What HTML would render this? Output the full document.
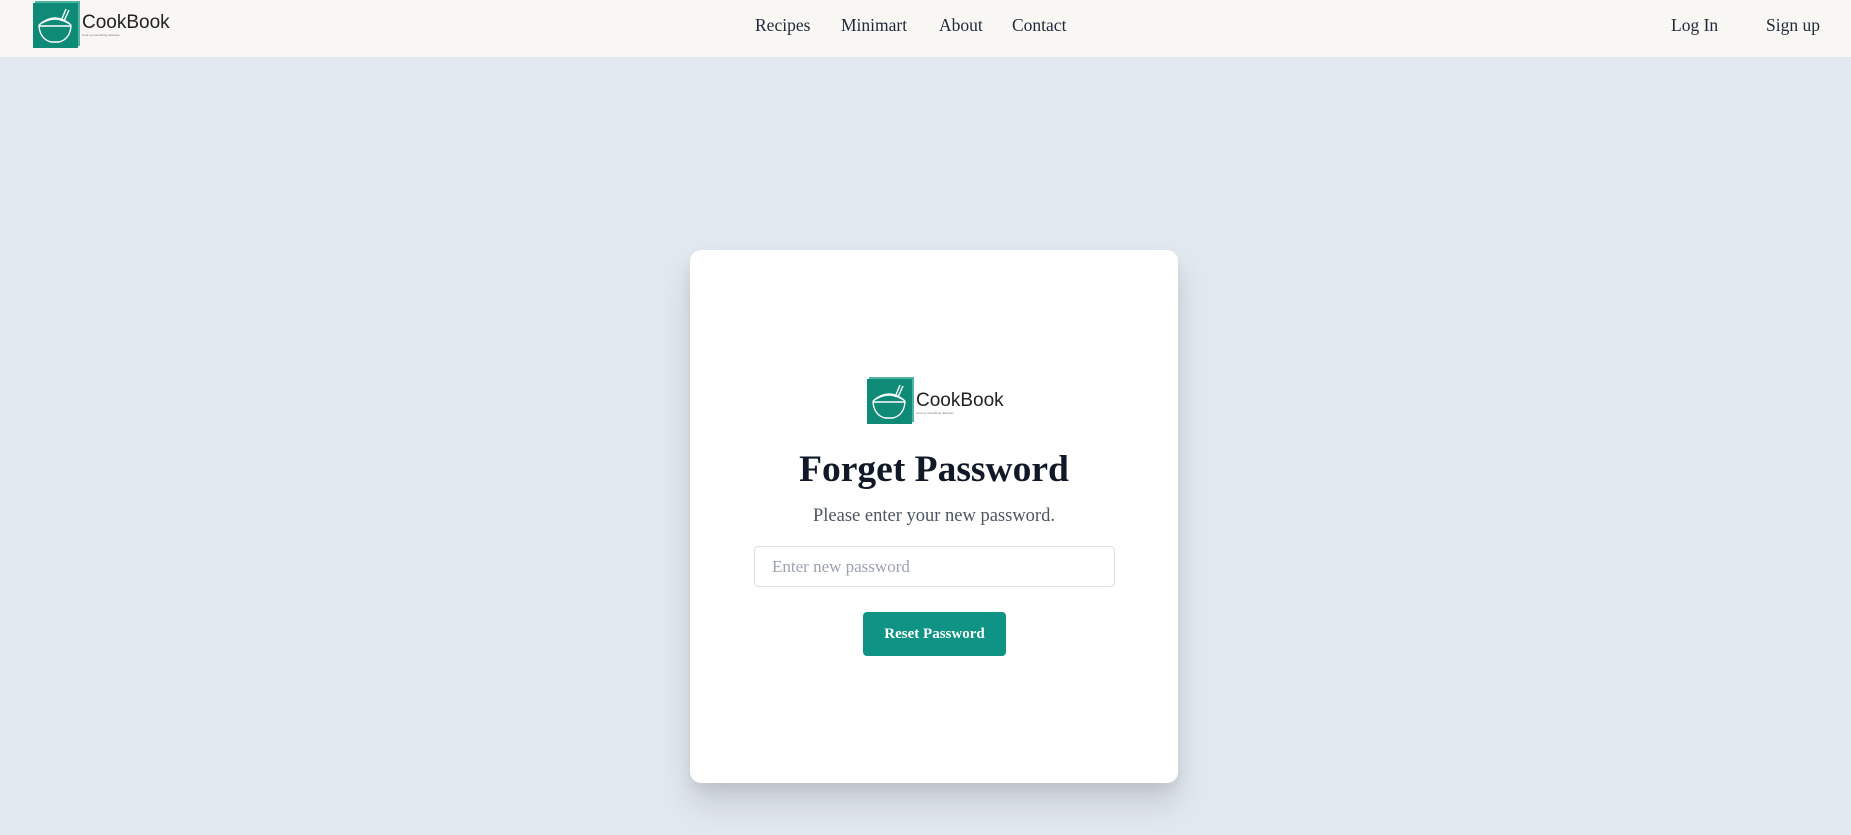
<!DOCTYPE html>
<html><head><meta charset="utf-8"><style>
*{margin:0;padding:0;box-sizing:border-box}
body{width:1851px;height:835px;overflow:hidden;background:#e2e8f0;font-family:"Liberation Serif",serif;color:#111827;position:relative}
.nav{position:absolute;left:0;top:0;width:1851px;height:57px;background:#f8f7f4}
.nav a{position:absolute;top:15px;font-size:17.5px;color:#1f2937;text-decoration:none}
.logo{position:absolute;display:flex;align-items:flex-start}
.ico{width:45px;height:45px;background:#0f8a76;position:relative;box-shadow:2px -2px 0 #4fb3a3}
.lt{font-family:"Liberation Sans",sans-serif;font-size:19px;color:#222;margin-left:4px;margin-top:10px;line-height:1;position:relative}
.lt small{position:absolute;left:0;top:21px;font-size:3px;color:#777;white-space:nowrap}
.card{position:absolute;left:690px;top:250px;width:488px;height:533px;background:#fff;border-radius:11px;box-shadow:0 20px 30px rgba(0,0,0,.12),0 6px 12px rgba(0,0,0,.06)}
h1{position:absolute;left:690px;width:488px;top:448px;text-align:center;font-size:37.5px;font-weight:bold;color:#111827}
.sub{position:absolute;left:690px;width:488px;top:506px;text-align:center;font-size:18.5px;color:#4b5563}
.inp{position:absolute;left:754px;top:546px;width:361px;height:41px;border:1px solid #dde1e6;border-radius:4px;background:#fff;font-size:17px;color:#9ca3af;padding:10px 17px}
.btn{position:absolute;left:863px;top:612px;width:143px;height:44px;background:#0e9384;border-radius:4px;color:#fff;font-weight:bold;font-size:15px;text-align:center;line-height:44px}
</style></head><body>
<div class="nav">
 <div class="logo" style="left:33px;top:3px">
  <div class="ico"><svg width="45" height="45" viewBox="0 0 45 45" fill="none" stroke="#fff" stroke-width="1.4"><path d="M6 22 Q22 8 38 22"/><path d="M9 20 Q22 12 35 20"/><path d="M6 23 H38 Q37 36 26 39 H18 Q7 36 6 23Z"/><path d="M28 18 L33 6 M31 18 L36 7"/></svg></div>
  <div class="lt">CookBook<small>cook up something delicious</small></div>
 </div>
 <a style="left:755px">Recipes</a><a style="left:841px">Minimart</a><a style="left:939px">About</a><a style="left:1012px">Contact</a>
 <a style="left:1671px">Log In</a><a style="left:1766px">Sign up</a>
</div>
<div class="card"></div>
<div class="logo" style="left:867px;top:379px">
 <div class="ico"><svg width="45" height="45" viewBox="0 0 45 45" fill="none" stroke="#fff" stroke-width="1.4"><path d="M6 22 Q22 8 38 22"/><path d="M9 20 Q22 12 35 20"/><path d="M6 23 H38 Q37 36 26 39 H18 Q7 36 6 23Z"/><path d="M28 18 L33 6 M31 18 L36 7"/></svg></div>
 <div class="lt" style="margin-top:12px">CookBook<small>cook up something delicious</small></div>
</div>
<h1>Forget Password</h1>
<div class="sub">Please enter your new password.</div>
<div class="inp">Enter new password</div>
<div class="btn">Reset Password</div>
</body></html>
